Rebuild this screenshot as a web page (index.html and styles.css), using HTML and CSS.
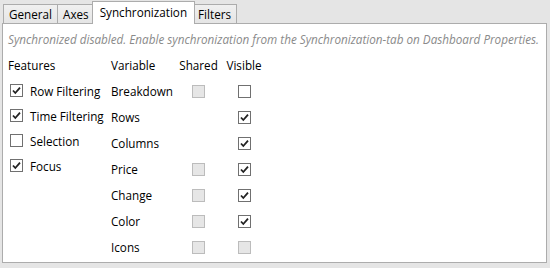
FILE: index.html
```html
<!DOCTYPE html>
<html lang="en">
<head>
    <meta charset="UTF-8">
    <title>Synchronization</title>
    <link rel="stylesheet" href="styles.css">
</head>
<body>
    <div class="tabs">
        <div class="tab">General</div>
        <div class="tab">Axes</div>
        <div class="tab selected">Synchronization</div>
        <div class="tab">Filters</div>
    </div>

    <div class="panel">
        <p class="message">Synchronized disabled. Enable synchronization from the Synchronization-tab on Dashboard Properties.</p>

        <div class="columns">
            <div class="features">
                <div class="heading">Features</div>
                <label class="feature"><span class="box checked"></span>Row Filtering</label>
                <label class="feature"><span class="box checked"></span>Time Filtering</label>
                <label class="feature"><span class="box"></span>Selection</label>
                <label class="feature"><span class="box checked"></span>Focus</label>
            </div>

            <div class="variables">
                <div class="heading">Variable</div>
                <div class="heading center">Shared</div>
                <div class="heading center">Visible</div>

                <div class="name">Breakdown</div>
                <div class="cell"><span class="box disabled"></span></div>
                <div class="cell"><span class="box"></span></div>

                <div class="name">Rows</div>
                <div class="cell"></div>
                <div class="cell"><span class="box checked"></span></div>

                <div class="name">Columns</div>
                <div class="cell"></div>
                <div class="cell"><span class="box checked"></span></div>

                <div class="name">Price</div>
                <div class="cell"><span class="box disabled"></span></div>
                <div class="cell"><span class="box checked"></span></div>

                <div class="name">Change</div>
                <div class="cell"><span class="box disabled"></span></div>
                <div class="cell"><span class="box checked"></span></div>

                <div class="name">Color</div>
                <div class="cell"><span class="box disabled"></span></div>
                <div class="cell"><span class="box checked"></span></div>

                <div class="name">Icons</div>
                <div class="cell"><span class="box disabled"></span></div>
                <div class="cell"><span class="box disabled"></span></div>
            </div>
        </div>
    </div>
</body>
</html>
```

FILE: styles.css
```css
body {
    margin: 0;
    font-family: 'Open Sans', 'Noto Sans', sans-serif;
    font-size: 11.7px;
    color: #000;
    background: #e5e5e5;
    width: 550px;
    height: 268px;
    overflow: hidden;
}

.tabs {
    display: flex;
    align-items: flex-end;
    height: 23px;
    padding-left: 3px;
}

.tab {
    box-sizing: border-box;
    height: 19px;
    padding: 0 5px;
    line-height: 18px;
    border: 1px solid #acacac;
    border-bottom: none;
    margin-left: -1px;
    background: linear-gradient(#f0f0f0, #e5e5e5);
}

.tab:first-child {
    margin-left: 0;
}

.tab.selected {
    position: relative;
    z-index: 1;
    height: 23px;
    margin: 0 -2px -1px -3px;
    padding: 0 7px 1px 7px;
    line-height: 21px;
    background: #fff;
}

.panel {
    box-sizing: border-box;
    height: 240px;
    margin: 0 3px 0 2px;
    border: 1px solid #acacac;
    background: #fff;
    padding: 0 5px;
}

.message {
    margin: 7px 0 5px 0;
    line-height: 16px;
    font-style: italic;
    color: #8a8a8a;
    white-space: nowrap;
}

.columns {
    display: flex;
}

.features {
    width: 103px;
}

.heading {
    height: 26px;
    line-height: 26px;
}

.center {
    text-align: center;
}

.feature {
    display: flex;
    align-items: center;
    gap: 7px;
    height: 25px;
    padding-left: 2px;
}

.variables {
    display: grid;
    grid-template-columns: 65px 45px 46px;
    grid-auto-rows: 26px;
    align-items: center;
}

.variables .heading {
    height: auto;
}

.cell {
    display: flex;
    justify-content: center;
}

.box {
    box-sizing: border-box;
    width: 13px;
    height: 13px;
    border: 1px solid #707070;
    background: #fff;
    flex-shrink: 0;
}

.box.checked {
    background: #fff url("data:image/svg+xml,%3Csvg xmlns='http://www.w3.org/2000/svg' width='11' height='11'%3E%3Cpath d='M2 5.5 L4.3 8 L9 2.6' fill='none' stroke='%23222' stroke-width='1.8'/%3E%3C/svg%3E") no-repeat center;
}

.box.disabled {
    border-color: #bcbcbc;
    background: #e6e6e6;
}
```
